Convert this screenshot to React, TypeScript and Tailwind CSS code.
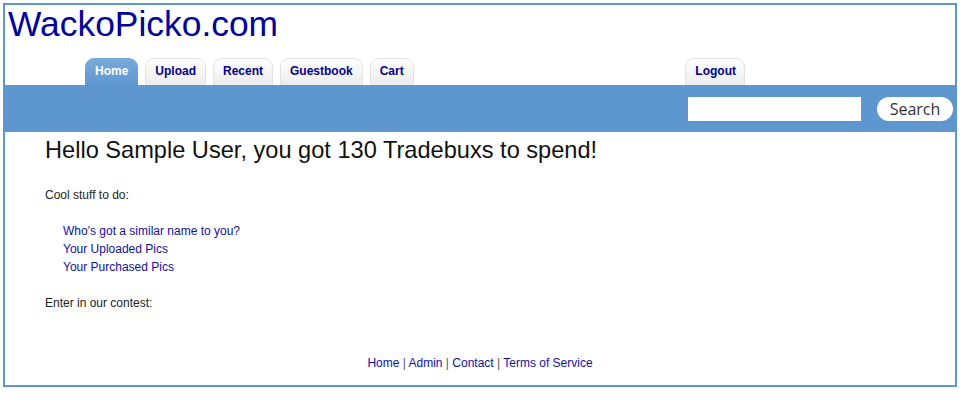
export default function App() {
  const tabs = ["Home", "Upload", "Recent", "Guestbook", "Cart"];
  const links = ["Who's got a similar name to you?", "Your Uploaded Pics", "Your Purchased Pics"];
  const footer = ["Home", "Admin", "Contact", "Terms of Service"];

  return (
    <div className="min-h-[400px] bg-white pt-[3px] pl-[3px] font-['Liberation_Sans',Arial,sans-serif]">
      <div className="w-[954px] border-2 border-[#5e96cf]">
        <div className="h-[53px] pl-[3px] text-[35.4px] leading-[38px] text-[#00009c]">WackoPicko.com</div>

        <div className="flex items-end pl-[80px]">
          <div className="flex gap-[7px]">
            {tabs.map((tab, i) => (
              <a
                key={tab}
                href="#"
                className={
                  i === 0
                    ? "flex h-[27px] items-start rounded-t-[9px] bg-gradient-to-b from-[#79abdc] to-[#5e96cf] px-[10px] pt-[6px] text-[12px] leading-[15px] font-bold text-white"
                    : "flex h-[27px] items-start rounded-t-[9px] border border-b-0 border-[#e2e2e2] bg-gradient-to-b from-white to-[#ececec] px-[9px] pt-[5px] text-[12px] leading-[15px] font-bold text-[#00008f]"
                }
              >
                {tab}
              </a>
            ))}
          </div>
          <a
            href="#"
            className="ml-auto mr-[210px] flex h-[27px] items-start rounded-t-[9px] border border-b-0 border-[#e2e2e2] bg-gradient-to-b from-white to-[#ececec] pl-[9px] pr-[8px] pt-[5px] text-[12px] leading-[15px] font-bold text-[#00008f]"
          >
            Logout
          </a>
        </div>

        <div className="flex h-[47px] items-start justify-end gap-[16px] bg-[#5e96cf] pt-[12px] pr-[2px]">
          <input type="text" className="h-[24px] w-[173px] bg-white outline-none" />
          <button
            type="button"
            className="h-[24px] w-[76px] rounded-full bg-white font-['Open_Sans',sans-serif] text-[16px] leading-[22px] text-[#333]"
          >
            Search
          </button>
        </div>

        <div className="pl-[40px]">
          <h1 className="mt-[4px] text-[23.6px] leading-[28px] text-[#111]">
            Hello Sample User, you got 130 Tradebuxs to spend!
          </h1>
          <p className="mt-[22px] text-[12px] leading-[18px] text-[#222]">Cool stuff to do:</p>
          <ul className="mt-[18px] pl-[18px]">
            {links.map((link) => (
              <li key={link} className="text-[12px] leading-[18px]">
                <a href="#" className="text-[#1010a0]">
                  {link}
                </a>
              </li>
            ))}
          </ul>
          <p className="mt-[18px] text-[12px] leading-[18px] text-[#222]">Enter in our contest:</p>
        </div>

        <div className="mt-[42px] pb-[13px] text-center text-[12px] leading-[18px] text-[#555]">
          {footer.map((item, i) => (
            <span key={item}>
              {i > 0 && " | "}
              <a href="#" className="text-[#1010a0]">
                {item}
              </a>
            </span>
          ))}
        </div>
      </div>
    </div>
  );
}
